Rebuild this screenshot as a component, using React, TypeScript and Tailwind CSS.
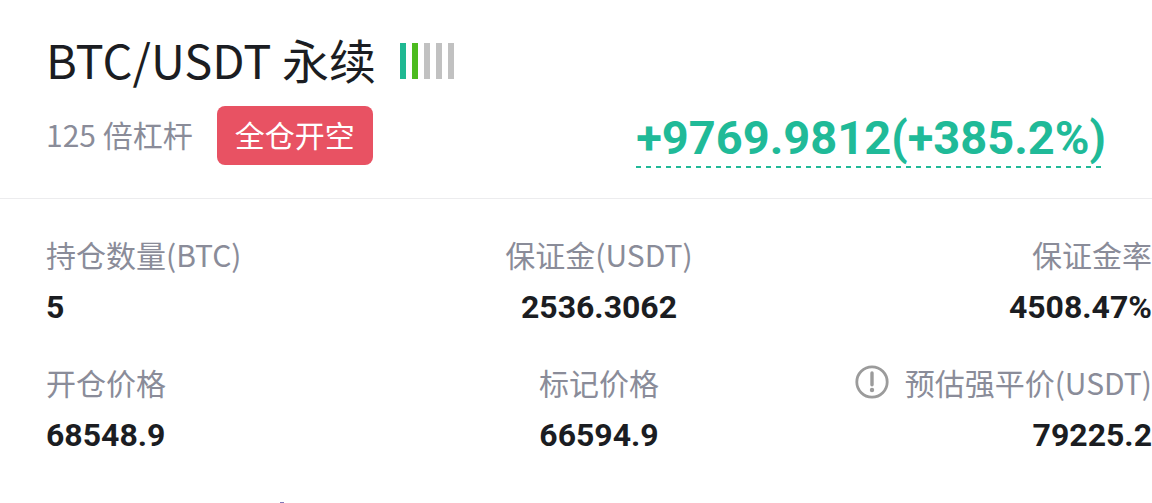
/**
 * PositionCard: summary of one open perpetual position.
 *
 * Layout:
 *   - Header: pair name with risk bars, leverage, side tag, unrealised PnL.
 *   - Stats: 3-column grid, first column left, middle centred, last right.
 */
import type { ReactNode } from 'react';

const FONT_TEXT = "font-['Noto_Sans_CJK_SC',sans-serif]";
const FONT_NUM = "font-['Roboto',sans-serif]";

type Align = 'left' | 'center' | 'right';

interface Stat {
  label: string;
  value: string;
  align: Align;
  hint?: boolean;
}

const STATS: Stat[] = [
  { label: '持仓数量(BTC)', value: '5', align: 'left' },
  { label: '保证金(USDT)', value: '2536.3062', align: 'center' },
  { label: '保证金率', value: '4508.47%', align: 'right' },
  { label: '开仓价格', value: '68548.9', align: 'left' },
  { label: '标记价格', value: '66594.9', align: 'center' },
  { label: '预估强平价(USDT)', value: '79225.2', align: 'right', hint: true },
];

const ALIGN: Record<Align, string> = {
  left: 'items-start',
  center: 'items-center',
  right: 'items-end',
};

const RISK_BARS = [
  'bg-[#1fb892]',
  'bg-[#4cbb1f]',
  'bg-[#c1c1c1]',
  'bg-[#c1c1c1]',
  'bg-[#c1c1c1]',
];

function RiskBars() {
  return (
    <div className="flex gap-1.5">
      {RISK_BARS.map((color, i) => (
        <span key={i} className={`h-9 w-1.5 ${color}`} />
      ))}
    </div>
  );
}

function HintIcon() {
  return (
    <svg width="34" height="34" viewBox="0 0 34 34" fill="none" aria-hidden="true">
      <circle cx="17" cy="17" r="15.2" stroke="#9b9b9b" strokeWidth="2.8" />
      <path d="M17 8v11.8" stroke="#9b9b9b" strokeWidth="3.4" strokeLinecap="round" />
      <circle cx="17" cy="25" r="2.2" fill="#9b9b9b" />
    </svg>
  );
}

function StatCell({ stat, children }: { stat: Stat; children?: ReactNode }) {
  return (
    <div className={`flex flex-col ${ALIGN[stat.align]}`}>
      <dt className="flex items-center gap-4 whitespace-nowrap text-[30px] leading-[42px] text-[#8a8c99]">
        {children}
        {stat.label}
      </dt>
      <dd className={`mt-[14px] text-[32px] font-bold leading-9 text-[#1b1d22] ${FONT_NUM}`}>
        {stat.value}
      </dd>
    </div>
  );
}

export default function App() {
  return (
    <main className={`flex min-h-screen flex-col overflow-hidden bg-white ${FONT_TEXT}`}>
      <header className="border-b border-[#ececee] px-[46px] pb-[30px] pt-[30px]">
        <div className="flex items-baseline gap-6">
          <h1 className="text-[47px] leading-[58px] text-[#1b1d22]">BTC/USDT 永续</h1>
          <RiskBars />
        </div>
        <div className="mt-[18px] flex items-start justify-between">
          <div className="flex items-center gap-6 text-[30px] leading-[57px]">
            <span className="pb-0.5 text-[#8a8c99]">125 倍杠杆</span>
            <span className="rounded-lg bg-[#e85263] px-[18px] pb-0.5 text-white">全仓开空</span>
          </div>
          <button
            type="button"
            className={`mt-1 flex flex-col text-[47px] font-bold leading-[56px] text-[#20ba98] ${FONT_NUM}`}
          >
            +9769.9812(+385.2%)
            <span className="h-0.5 w-full bg-[repeating-linear-gradient(to_right,#20ba98_0_5px,transparent_5px_10px)]" />
          </button>
        </div>
      </header>

      <dl className="grid grid-cols-3 gap-y-9 pl-[46px] pt-[34px]">
        {STATS.map((stat) => (
          <StatCell key={stat.label} stat={stat}>
            {stat.hint && (
              <button type="button" aria-label="预估强平价说明">
                <HintIcon />
              </button>
            )}
          </StatCell>
        ))}
      </dl>

      {/* Tip of the chart line that starts below the card */}
      <div className="mt-auto pl-[280px]">
        <div className="h-px w-1 bg-[#8078b8]" />
      </div>
    </main>
  );
}
